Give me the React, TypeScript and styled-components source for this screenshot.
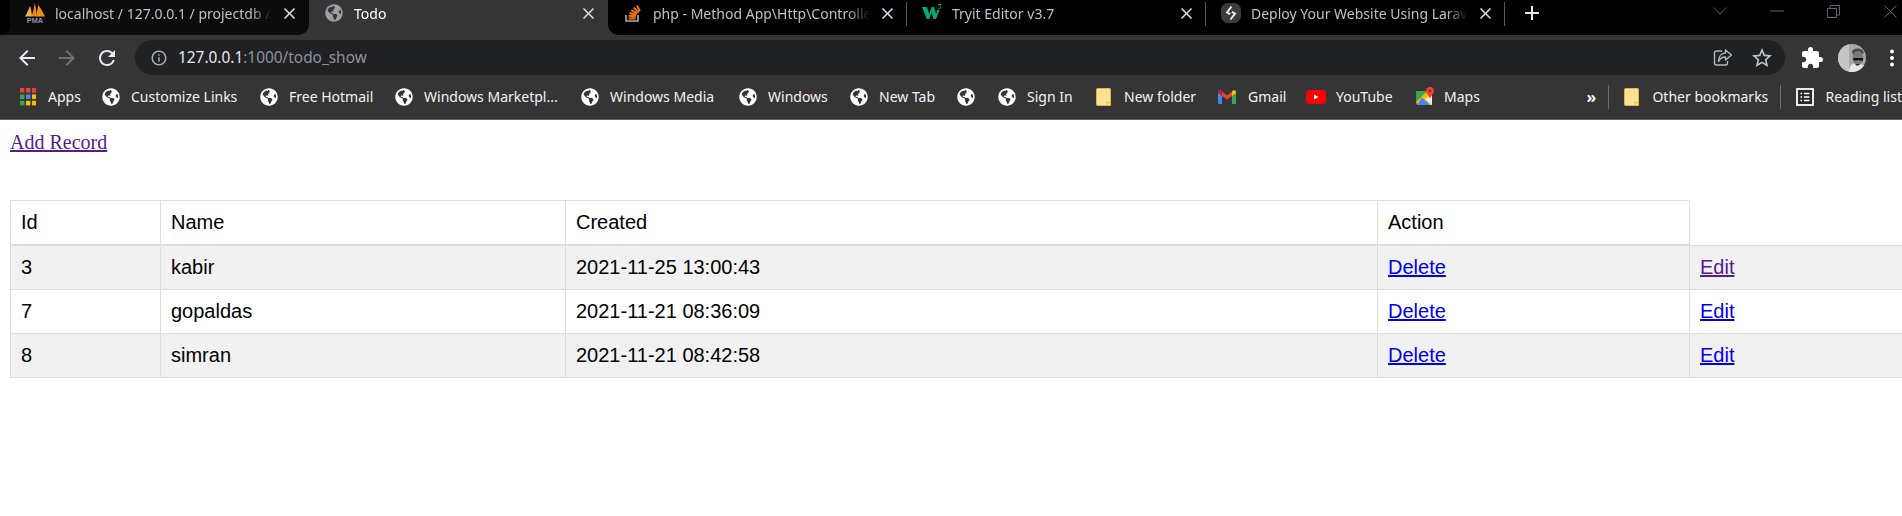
import React from 'react';
import styled, { createGlobalStyle } from 'styled-components';
import { FaGlobeAmericas } from 'react-icons/fa';
import { MdArrowBack, MdArrowForward, MdRefresh, MdInfoOutline, MdStarBorder, MdExtension, MdClose, MdAdd } from 'react-icons/md';

const chromeFont = `"Noto Sans", "Open Sans", sans-serif`;

const GlobalStyle = createGlobalStyle`
  html, body {
    margin: 0;
    padding: 0;
    background: #fff;
    overflow: hidden;
  }
`;

const Window = styled.div`
  width: 1902px;
  height: 516px;
  overflow: hidden;
`;

const TabStrip = styled.div`
  display: flex;
  height: 35px;
  padding-left: 10px;
  background: #000;
  position: relative;
  font-family: ${chromeFont};
  font-size: 14px;
`;

const Tab = styled.div<{ $active?: boolean; $hover?: boolean; $sep?: boolean }>`
  position: relative;
  flex: 0 0 299px;
  min-width: 0;
  display: flex;
  align-items: center;
  height: 35px;
  padding: 0 10px 9px 15px;
  box-sizing: border-box;
  color: ${(p) => (p.$active ? '#fff' : '#bdc1c6')};
  background: ${(p) => (p.$active ? '#353535' : p.$hover ? '#0c0c0c' : '#000')};
  z-index: ${(p) => (p.$active ? 2 : 1)};

  ${(p) =>
    p.$active || p.$hover
      ? `
    &::before, &::after {
      content: '';
      position: absolute;
      bottom: 0;
      width: 10px;
      height: 10px;
    }
    &::before {
      left: -10px;
      background: radial-gradient(circle at 0 0, transparent 9.5px, ${p.$active ? '#353535' : '#0c0c0c'} 10px);
    }
    &::after {
      right: -10px;
      background: radial-gradient(circle at 100% 0, transparent 9.5px, ${p.$active ? '#353535' : '#0c0c0c'} 10px);
    }
  `
      : ''}

  ${(p) =>
    p.$sep
      ? `
    &::after {
      content: '';
      position: absolute;
      right: 0;
      top: 2px;
      height: 24px;
      width: 1px;
      background: #5a5a5a;
    }
  `
      : ''}
`;

const Favicon = styled.span`
  flex: 0 0 20px;
  height: 20px;
  margin-right: 10px;
  display: flex;
  align-items: center;
  justify-content: center;
`;

const TabTitle = styled.span`
  flex: 1;
  min-width: 0;
  overflow: hidden;
  white-space: nowrap;
  -webkit-mask-image: linear-gradient(to right, #000 calc(100% - 22px), transparent);
  mask-image: linear-gradient(to right, #000 calc(100% - 22px), transparent);
`;

const TabClose = styled(MdClose)`
  flex: 0 0 19px;
  margin-left: 8px;
  color: #dadce0;
  font-size: 19px;
`;

const NewTab = styled(MdAdd)`
  flex: 0 0 24px;
  margin: 1px 0 0 15px;
  font-size: 24px;
  color: #e8eaed;
`;

const WindowControls = styled.div`
  margin-left: auto;
  margin-right: -17px;
  display: flex;
  align-items: flex-start;
`;

const WindowControl = styled.span`
  width: 57px;
  height: 22px;
  display: flex;
  align-items: center;
  justify-content: center;
`;

const Toolbar = styled.div`
  display: flex;
  height: 40px;
  padding: 5px 0 0 7px;
  box-sizing: border-box;
  background: #353535;
  font-family: ${chromeFont};
`;

const IconButton = styled.span<{ $dim?: boolean }>`
  flex: 0 0 40px;
  height: 35px;
  display: flex;
  align-items: center;
  justify-content: center;
  color: ${(p) => (p.$dim ? '#6f7173' : '#e8eaed')};
  font-size: 24px;
`;

const Omnibox = styled.div`
  flex: 1;
  margin-left: 8px;
  display: flex;
  align-items: center;
  padding: 0 11px 0 15px;
  background: #202124;
  border-radius: 18px;
  font-size: 15.4px;
`;

const InfoIcon = styled(MdInfoOutline)`
  font-size: 18px;
  color: #a9acb0;
  margin-right: 10px;
`;

const Host = styled.span`
  color: #e8eaed;
`;

const UrlRest = styled.span`
  color: #8f9398;
  flex: 1;
`;

const StarIcon = styled(MdStarBorder)`
  font-size: 24px;
  color: #c4c7ca;
  margin-left: 17px;
`;

const AccountGroup = styled.div`
  flex: 0 0 127px;
  margin-right: -10px;
  display: flex;
  padding-left: 7px;
  box-sizing: border-box;
`;

const Bookmarks = styled.div`
  display: flex;
  align-items: center;
  height: 45px;
  padding: 0 0 1px 20px;
  box-sizing: border-box;
  overflow: hidden;
  background: #353535;
  border-bottom: 1px solid #626262;
  font-family: ${chromeFont};
  font-size: 14px;
  color: #f1f3f4;
`;

const BookmarkList = styled.div`
  display: flex;
  align-items: center;
  gap: 23px;
`;

const Bookmark = styled.div`
  display: flex;
  align-items: center;
`;

const BookmarkIcon = styled.span<{ $slot: number }>`
  flex: 0 0 ${(p) => p.$slot}px;
  height: 20px;
  display: flex;
  align-items: center;
  color: #fff;
  font-size: 18px;
`;

const BookmarkLabel = styled.span<{ $w?: number }>`
  width: ${(p) => (p.$w ? `${p.$w}px` : 'auto')};
  white-space: nowrap;
`;

const BookmarkExtras = styled.div`
  flex: 0 0 312px;
  margin-left: auto;
  display: flex;
  align-items: center;
`;

const Overflow = styled.span`
  width: 22px;
  font-size: 16px;
  font-weight: 700;
  line-height: 1;
`;

const BarDivider = styled.span<{ $after?: boolean }>`
  width: 1px;
  height: 24px;
  background: #6b6b6b;
  margin-right: 15px;
  margin-left: ${(p) => (p.$after ? '13px' : '0')};
`;

const Page = styled.div`
  padding: 11px 0 0 10px;
  font-family: "Liberation Serif", serif;
  font-size: 20px;
  line-height: 23px;
`;

const TopLink = styled.a`
  color: #551a8b;
  text-decoration: underline;
`;

const TopRow = styled.div`
  margin-bottom: 46px;
`;

const Table = styled.table`
  border-collapse: collapse;
  table-layout: fixed;
  width: 2000px;
  font-family: "Liberation Sans", Arial, sans-serif;
  font-size: 20px;
  line-height: 23px;
  color: #000;
`;

const Row = styled.tr<{ $shade?: boolean }>`
  background: ${(p) => (p.$shade ? '#f1f1f1' : '#fff')};
`;

const HeadCell = styled.th`
  padding: 10px;
  border: 1px solid #ddd;
  border-bottom: 2px solid #ddd;
  font-weight: 400;
  text-align: left;
`;

const Cell = styled.td`
  padding: 10px;
  border: 1px solid #ddd;
`;

const CellLink = styled.a<{ $visited?: boolean }>`
  color: ${(p) => (p.$visited ? '#551a8b' : '#0000ee')};
  text-decoration: underline;
`;

const PmaIcon = () => (
  <svg width="20" height="20" viewBox="0 0 20 20">
    <path d="M0 13.5 C2.5 9 4 6 5 3 C6.2 6 6.8 10 7 13.5 Z" fill="#f3b04a" />
    <path d="M6.5 13.5 C8 9 9 5 9.8 0 C11 5 11.8 10 11.5 13.5 Z" fill="#e88a1a" />
    <path d="M11 13.5 C12 9 12.8 5 13.2 2 C15.5 5 18.5 10 20 13.5 Z" fill="#f29111" />
    <text x="10" y="20" textAnchor="middle" fontSize="7.4" fontWeight="700" fontFamily="Liberation Sans" fill="#8a92b8">PMA</text>
  </svg>
);

const StackIcon = () => (
  <svg width="20" height="20" viewBox="0 0 20 20">
    <path d="M3 12 v6 h12 v-6" fill="none" stroke="#b0b0b0" strokeWidth="1.6" />
    <path d="M5.5 15.5 h7 M5.7 12.8 l7 .7 M6.5 10 l6.8 2 M8.2 7.2 l6 3.4 M10.8 4.6 l4.8 4.8 M14 2.5 l2.8 5.6" stroke="#f2740d" strokeWidth="2" fill="none" />
  </svg>
);

const W3Icon = () => (
  <svg width="20" height="20" viewBox="0 0 20 20">
    <path d="M0 4 h5 l2.4 7 2-7 h2.6 l2.2 7 1-4 h2.4 L14 16 h-2.6 l-2-6.4 -2 6.4 H4.8 Z" fill="#04aa6d" />
    <path d="M16 1.5 h3 l-1.4 1.6 c1.6 .3 1.4 2.6 -.4 2.6 -.6 0 -1 -.2 -1.3 -.5" fill="none" stroke="#04aa6d" strokeWidth=".9" />
  </svg>
);

const DeployIcon = () => (
  <svg width="20" height="20" viewBox="0 0 20 20">
    <rect width="20" height="20" rx="7" fill="#3c3c3c" />
    <path d="M10.5 3.5 L6 9.5 l3.2 1.6 M9.5 16.5 L14 10.5 l-3.2 -1.6" fill="none" stroke="#fff" strokeWidth="1.8" />
  </svg>
);

const ChevronGlyph = () => (
  <svg width="14" height="10" viewBox="0 0 14 10">
    <path d="M1 1.5 l6 6.5 6 -6.5" fill="none" stroke="#5f6368" />
  </svg>
);

const MinimizeGlyph = () => (
  <svg width="14" height="2" viewBox="0 0 14 2">
    <path d="M0 1 h14" stroke="#5f6368" />
  </svg>
);

const RestoreGlyph = () => (
  <svg width="13" height="13" viewBox="0 0 13 13">
    <path d="M.5 3.5 h9 v9 h-9 Z M3 3 v-2.5 h9.5 v9.5 h-3" fill="none" stroke="#5f6368" />
  </svg>
);

const CloseGlyph = () => (
  <svg width="13" height="13" viewBox="0 0 13 13">
    <path d="M.5 .5 l12 12 M12.5 .5 l-12 12" fill="none" stroke="#5f6368" />
  </svg>
);

const ShareIcon = () => (
  <svg width="20" height="20" viewBox="0 0 20 20" fill="none" stroke="#b5b7ba" strokeWidth="1.4">
    <path d="M9 3 H3.5 a2 2 0 0 0 -2 2 v10 a2 2 0 0 0 2 2 h9 a2 2 0 0 0 2 -2 v-2" />
    <path d="M12.5 2 L18.5 7 12.5 12 V9 C9 9 7 10.5 5.5 13.5 5.5 9 8 5.2 12.5 5 Z" strokeLinejoin="round" />
  </svg>
);

const Avatar = () => (
  <svg width="28" height="28" viewBox="0 0 28 28">
    <defs>
      <clipPath id="avatarClip">
        <circle cx="14" cy="14" r="14" />
      </clipPath>
    </defs>
    <g clipPath="url(#avatarClip)">
      <rect width="28" height="28" fill="#a8a8a8" />
      <rect width="11" height="28" fill="#c4c4c4" />
      <path d="M11 28 C11 22 14 19 19 19 L28 22 V28 Z" fill="#e6e6e6" />
      <path d="M14 7 C18 3 25 4 26 9 L24 10 C21 8 17 9 15 11 Z" fill="#4a4a4a" />
      <ellipse cx="20" cy="14" rx="5.5" ry="7" fill="#7a7a7a" />
      <path d="M15 14 h10 v2.5 h-3.5 l-1 -1 -1 1 H16 Z" fill="#111" />
      <path d="M17 20 h5 l-1.5 1.6 h-2 Z" fill="#222" />
    </g>
  </svg>
);

const Kebab = () => (
  <svg width="6" height="18" viewBox="0 0 6 18" fill="#fff">
    <circle cx="3" cy="2.5" r="2" />
    <circle cx="3" cy="9" r="2" />
    <circle cx="3" cy="15.5" r="2" />
  </svg>
);

const AppsIcon = () => (
  <svg width="16" height="18" viewBox="0 0 16 18">
    {['#ea4335', '#ea4335', '#ea4335', '#34a853', '#4285f4', '#fbbc04', '#34a853', '#fbbc04', '#fbbc04'].map((c, i) => (
      <rect key={i} x={(i % 3) * 6} y={Math.floor(i / 3) * 6.4} width="4.4" height="4.6" fill={c} />
    ))}
  </svg>
);

const FolderIcon = () => (
  <svg width="15" height="18" viewBox="0 0 15 18">
    <path d="M1.5 .5 h12 a1 1 0 0 1 1 1 V17 a.5 .5 0 0 1 -.5 .5 H1.5 a1 1 0 0 1 -1 -1 V1.5 a1 1 0 0 1 1 -1 Z" fill="#fde293" stroke="#e2b84e" />
    <path d="M11 17.5 v-3 h3.5" fill="none" stroke="#e2b84e" />
  </svg>
);

const GmailIcon = () => (
  <svg width="18" height="14" viewBox="0 0 18 14">
    <path d="M0 2 a2 2 0 0 1 3 -1.5 L4 1.5 V14 H1 a1 1 0 0 1 -1 -1 Z" fill="#4285f4" />
    <path d="M18 2 a2 2 0 0 0 -3 -1.5 L14 1.5 V14 h3 a1 1 0 0 0 1 -1 Z" fill="#34a853" />
    <path d="M14 1.5 L15.5 .3 A2 2 0 0 1 18 2 V3 L14 6 Z" fill="#fbbc04" />
    <path d="M0 2 A2 2 0 0 1 2.5 .3 L4 1.5 V6 L0 3 Z" fill="#c5221f" />
    <path d="M4 1.5 L9 5.4 14 1.5 V6 L9 9.6 4 6 Z" fill="#ea4335" />
  </svg>
);

const YoutubeIcon = () => (
  <svg width="20" height="14" viewBox="0 0 20 14">
    <rect width="20" height="14" rx="3.5" fill="#ff0000" />
    <path d="M8 4.5 L12.5 7 8 9.5 Z" fill="#fff" />
  </svg>
);

const MapsIcon = () => (
  <svg width="18" height="20" viewBox="0 0 18 20">
    <path d="M0 4 H11 L0 15 Z" fill="#34a853" />
    <path d="M0 15 L11 4 L16 9 V18 H1 Z" fill="#fbbc04" />
    <path d="M6 10.5 L14 18 H1 Z" fill="#4285f4" />
    <path d="M9 12 L16 8 V18 Z" fill="#e8eaed" />
    <path d="M14 0 a4 4 0 0 1 4 4 c0 2.6 -3 4.4 -4 7.5 C13 8.4 10 6.6 10 4 a4 4 0 0 1 4 -4 Z" fill="#ea4335" />
    <circle cx="14" cy="4" r="1.4" fill="#a52714" />
  </svg>
);

const ReadingListIcon = () => (
  <svg width="18" height="18" viewBox="0 0 18 18">
    <rect x="1" y="1" width="16" height="16" fill="#2a2a2a" stroke="#fff" strokeWidth="1.8" />
    <path d="M4.5 5.5 h1.6 M8 5.5 h5.5 M4.5 9 h1.6 M8 9 h5.5 M4.5 12.5 h1.6 M8 12.5 h5.5" stroke="#fff" strokeWidth="1.6" />
  </svg>
);

const globe = <FaGlobeAmericas />;

const bookmarks = [
  { icon: <AppsIcon />, slot: 28, label: 'Apps', w: 31 },
  { icon: globe, slot: 29, label: 'Customize Links', w: 106 },
  { icon: globe, slot: 29, label: 'Free Hotmail', w: 83 },
  { icon: globe, slot: 29, label: 'Windows Marketpl...', w: 134 },
  { icon: globe, slot: 29, label: 'Windows Media', w: 106 },
  { icon: globe, slot: 29, label: 'Windows', w: 59 },
  { icon: globe, slot: 29, label: 'New Tab', w: 55 },
  { icon: globe, slot: 17, label: '', w: 0 },
  { icon: globe, slot: 29, label: 'Sign In', w: 46 },
  { icon: <FolderIcon />, slot: 28, label: 'New folder', w: 71 },
  { icon: <GmailIcon />, slot: 30, label: 'Gmail', w: 35 },
  { icon: <YoutubeIcon />, slot: 30, label: 'YouTube', w: 57 },
  { icon: <MapsIcon />, slot: 28, label: 'Maps', w: 36 },
];

const records = [
  { id: 3, name: 'kabir', created: '2021-11-25 13:00:43', editVisited: true },
  { id: 7, name: 'gopaldas', created: '2021-11-21 08:36:09' },
  { id: 8, name: 'simran', created: '2021-11-21 08:42:58' },
];

const App: React.FC = () => {
  return (
    <Window>
      <GlobalStyle />
      <TabStrip>
        <Tab $hover>
          <Favicon><PmaIcon /></Favicon>
          <TabTitle>localhost / 127.0.0.1 / projectdb / todo_tbl</TabTitle>
          <TabClose />
        </Tab>
        <Tab $active>
          <Favicon><FaGlobeAmericas size={18} color="#9aa0a6" /></Favicon>
          <TabTitle>Todo</TabTitle>
          <TabClose />
        </Tab>
        <Tab $sep>
          <Favicon><StackIcon /></Favicon>
          <TabTitle>php - Method App\Http\Controllers\TodoController</TabTitle>
          <TabClose />
        </Tab>
        <Tab $sep>
          <Favicon><W3Icon /></Favicon>
          <TabTitle>Tryit Editor v3.7</TabTitle>
          <TabClose />
        </Tab>
        <Tab $sep>
          <Favicon><DeployIcon /></Favicon>
          <TabTitle>Deploy Your Website Using Laravel and Git</TabTitle>
          <TabClose />
        </Tab>
        <NewTab />
        <WindowControls>
          <WindowControl><ChevronGlyph /></WindowControl>
          <WindowControl><MinimizeGlyph /></WindowControl>
          <WindowControl><RestoreGlyph /></WindowControl>
          <WindowControl><CloseGlyph /></WindowControl>
        </WindowControls>
      </TabStrip>

      <Toolbar>
        <IconButton><MdArrowBack /></IconButton>
        <IconButton $dim><MdArrowForward /></IconButton>
        <IconButton><MdRefresh /></IconButton>
        <Omnibox>
          <InfoIcon />
          <Host>127.0.0.1</Host>
          <UrlRest>:1000/todo_show</UrlRest>
          <ShareIcon />
          <StarIcon />
        </Omnibox>
        <AccountGroup>
          <IconButton><MdExtension color="#fff" /></IconButton>
          <IconButton><Avatar /></IconButton>
          <IconButton><Kebab /></IconButton>
        </AccountGroup>
      </Toolbar>

      <Bookmarks>
        <BookmarkList>
          {bookmarks.map((b, i) => (
            <Bookmark key={i}>
              <BookmarkIcon $slot={b.slot}>{b.icon}</BookmarkIcon>
              {b.label && <BookmarkLabel $w={b.w}>{b.label}</BookmarkLabel>}
            </Bookmark>
          ))}
        </BookmarkList>
        <BookmarkExtras>
          <Overflow>»</Overflow>
          <BarDivider />
          <BookmarkIcon $slot={28}><FolderIcon /></BookmarkIcon>
          <BookmarkLabel $w={115}>Other bookmarks</BookmarkLabel>
          <BarDivider $after />
          <BookmarkIcon $slot={29}><ReadingListIcon /></BookmarkIcon>
          <BookmarkLabel>Reading list</BookmarkLabel>
        </BookmarkExtras>
      </Bookmarks>

      <Page>
        <TopRow>
          <TopLink href="#add">Add Record</TopLink>
        </TopRow>
        <Table>
          <colgroup>
            <col width="150" />
            <col width="405" />
            <col width="812" />
            <col width="312" />
            <col width="321" />
          </colgroup>
          <thead>
            <Row>
              <HeadCell>Id</HeadCell>
              <HeadCell>Name</HeadCell>
              <HeadCell>Created</HeadCell>
              <HeadCell>Action</HeadCell>
            </Row>
          </thead>
          <tbody>
            {records.map((r, i) => (
              <Row key={r.id} $shade={i % 2 === 0}>
                <Cell>{r.id}</Cell>
                <Cell>{r.name}</Cell>
                <Cell>{r.created}</Cell>
                <Cell><CellLink href="#delete">Delete</CellLink></Cell>
                <Cell><CellLink href="#edit" $visited={r.editVisited}>Edit</CellLink></Cell>
              </Row>
            ))}
          </tbody>
        </Table>
      </Page>
    </Window>
  );
};

export default App;
